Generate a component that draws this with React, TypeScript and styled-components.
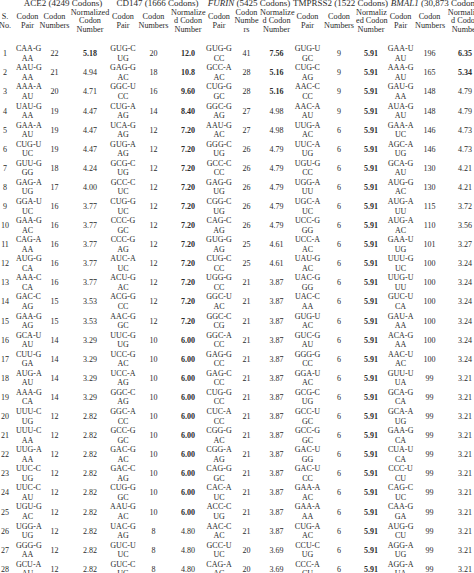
import styled, { createGlobalStyle } from "styled-components";

const GlobalStyle = createGlobalStyle`
  html, body {
    margin: 0;
    padding: 0;
    background: #ffffff;
    overflow: hidden;
  }
  body {
    font-family: "Liberation Serif", "DejaVu Serif", serif;
    color: #2b2b2b;
  }
`;

const Page = styled.div`
  width: 474px;
  height: 573px;
  overflow: hidden;
`;

const DataTable = styled.table`
  border-collapse: collapse;
  table-layout: fixed;
  width: 492px;
  margin-left: -6px;
  margin-top: -3px;
`;

const GroupRow = styled.tr`
  height: 12px;
`;

const GroupCell = styled.th`
  padding: 0;
  font-size: 9px;
  line-height: 10px;
  font-weight: 400;
  text-align: center;
  white-space: nowrap;
  vertical-align: middle;
`;

const Gene = styled.i`
  font-style: italic;
`;

const HeadCell = styled.th`
  padding: 0 0 10px;
  height: 25px;
  font-size: 8.2px;
  line-height: 8.4px;
  font-weight: 400;
  text-align: center;
  vertical-align: middle;
  white-space: nowrap;
`;

const BodyRow = styled.tr`
  height: 19.1px;
`;

const NoCell = styled.td`
  padding: 0;
  font-size: 8px;
  text-align: center;
  vertical-align: middle;
`;

const PairCell = styled.td`
  padding: 0;
  font-size: 8px;
  line-height: 9.55px;
  text-align: center;
  vertical-align: middle;
  white-space: nowrap;
`;

const NumCell = styled.td<{ $bold?: boolean }>`
  padding: 0;
  font-size: 8px;
  font-weight: ${(p) => (p.$bold ? 700 : 400)};
  text-align: center;
  vertical-align: middle;
`;

const widths = [22, 23, 31, 40, 26, 35, 34, 28, 27, 33, 29, 34, 30, 29, 29, 42];

interface Gene {
  name: string;
  italic: boolean;
  codons: string;
  normHead: string[];
  numHead: string[];
  rows: string[];
}

// "pair-line1/pair-line2 count normalized", a leading * marks a bold value
const genes: Gene[] = [
  {
    name: "ACE2",
    italic: false,
    codons: "4249",
    numHead: ["Codon", "Numbers"],
    normHead: ["Normalized", "Codon", "Number"],
    rows: [
      "CAA-G/AA 22 *5.18", "AAU-G/AA 21 4.94", "AAA-A/AU 20 4.71", "UAU-G/AA 19 4.47",
      "GAA-A/AU 19 4.47", "CUG-U/UC 19 4.47", "GUU-G/GG 18 4.24", "GAG-A/UG 17 4.00",
      "GGA-U/UC 16 3.77", "GAA-G/AC 16 3.77", "CAG-A/AA 16 3.77", "AUG-G/CA 16 3.77",
      "AAA-C/CA 16 3.77", "GAC-C/AG 15 3.53", "GAA-G/AG 15 3.53", "GCA-U/AU 14 3.29",
      "CUU-G/GA 14 3.29", "AUG-A/AU 14 3.29", "AAA-G/CA 14 3.29", "UUU-C/UG 12 2.82",
      "UUU-C/AA 12 2.82", "UUG-A/AA 12 2.82", "UUC-C/UG 12 2.82", "UUC-C/AU 12 2.82",
      "UGU-G/AC 12 2.82", "UGG-A/UG 12 2.82", "GGG-G/AA 12 2.82", "GCU-A/AU 12 2.82",
      "GGA-G/AA 12 2.82",
    ],
  },
  {
    name: "CD147",
    italic: false,
    codons: "1666",
    numHead: ["Codon", "Numbers"],
    normHead: ["Normalize", "d Codon", "Number"],
    rows: [
      "GUG-C/UG 20 *12.0", "GAG-G/AC 18 *10.8", "GGC-U/CC 16 *9.60", "CUG-A/AG 14 *8.40",
      "UCA-G/AG 12 *7.20", "GUG-A/AG 12 *7.20", "GCG-C/UG 12 *7.20", "GCC-C/UC 12 *7.20",
      "CUG-G/UC 12 *7.20", "CCC-G/GC 12 *7.20", "CCC-G/AG 12 *7.20", "AUC-A/UC 12 *7.20",
      "ACU-G/AC 12 *7.20", "ACG-G/CC 12 *7.20", "AAC-G/GC 12 *7.20", "UUC-G/UG 10 *6.00",
      "UCC-G/AC 10 *6.00", "UCC-A/AG 10 *6.00", "GGC-C/AG 10 *6.00", "GGC-A/CC 10 *6.00",
      "GCC-G/GC 10 *6.00", "GAC-G/AC 10 *6.00", "GAC-C/AG 10 *6.00", "CUG-G/GC 10 *6.00",
      "AAU-G/AC 10 *6.00", "UAC-G/AG 8 4.80", "GUC-U/UC 8 4.80", "GUC-C/UG 8 4.80",
      "GUG-G/UG 8 4.80",
    ],
  },
  {
    name: "FURIN",
    italic: true,
    codons: "5425",
    numHead: ["Codon", "Numbe", "rs"],
    normHead: ["Normalize", "d Codon", "Number"],
    rows: [
      "GUG-G/CC 41 *7.56", "GCC-A/AC 28 *5.16", "CUG-G/GC 28 *5.16", "GGC-G/AG 27 4.98",
      "AAU-G/AC 27 4.98", "GGG-C/UG 26 4.79", "GCC-C/CC 26 4.79", "GAG-G/UG 26 4.79",
      "CGG-C/UG 26 4.79", "CAG-C/AG 26 4.79", "GUG-G/AG 25 4.61", "CUG-C/CC 25 4.61",
      "UGG-G/CC 21 3.87", "GGC-U/AC 21 3.87", "GGC-C/CG 21 3.87", "GGC-A/CC 21 3.87",
      "GAG-G/CC 21 3.87", "GAG-C/CC 21 3.87", "CUG-G/CC 21 3.87", "CUC-A/CC 21 3.87",
      "CGG-G/AC 21 3.87", "CGG-A/AG 21 3.87", "CAG-G/GC 21 3.87", "CAC-A/UC 21 3.87",
      "ACC-C/UG 21 3.87", "AAC-C/AC 21 3.87", "GCC-U/UC 20 3.69", "CAG-A/AG 20 3.69",
      "CCU-G/GC 20 3.69",
    ],
  },
  {
    name: "TMPRSS2",
    italic: false,
    codons: "1522",
    numHead: ["Codon", "Numbers"],
    normHead: ["Normaliz", "ed Codon", "Number"],
    rows: [
      "GUG-U/GC 9 *5.91", "CUG-C/AG 9 *5.91", "AAC-C/CC 9 *5.91", "AAC-A/AU 9 *5.91",
      "UUG-A/AC 6 *5.91", "UUC-A/UG 6 *5.91", "UGU-G/CC 6 *5.91", "UGG-A/UU 6 *5.91",
      "UGC-A/UC 6 *5.91", "UCC-G/GG 6 *5.91", "UCC-A/AC 6 *5.91", "UAU-G/AC 6 *5.91",
      "UAC-G/GG 6 *5.91", "UAC-C/AA 6 *5.91", "GUG-U/AC 6 *5.91", "GUC-G/AU 6 *5.91",
      "GGG-G/CC 6 *5.91", "GGA-U/AC 6 *5.91", "GCG-C/UG 6 *5.91", "GCC-U/GC 6 *5.91",
      "GCC-G/GC 6 *5.91", "GAC-U/GG 6 *5.91", "GAC-U/CC 6 *5.91", "GAA-A/AC 6 *5.91",
      "GAA-A/AA 6 *5.91", "CUG-A/AC 6 *5.91", "CCU-C/UG 6 *5.91", "CCC-A/CU 6 *5.91",
      "CCA-G/CU 6 *5.91",
    ],
  },
  {
    name: "BMAL1",
    italic: true,
    codons: "30,873",
    numHead: ["Codon", "Numbers"],
    normHead: ["Normalize", "d Codon", "Number"],
    rows: [
      "GAA-U/AU 196 *6.35", "AAA-G/AU 165 *5.34", "GAU-G/AA 148 4.79", "AUA-G/AU 148 4.79",
      "GAA-A/UC 146 4.73", "AGC-A/UG 146 4.73", "GCA-G/AU 130 4.21", "AUG-G/AC 130 4.21",
      "AUG-A/UU 115 3.72", "AUG-A/AC 110 3.56", "GAA-U/UG 101 3.27", "UUU-G/UC 100 3.24",
      "UUG-U/UU 100 3.24", "GUC-U/CA 100 3.24", "GAU-A/AA 100 3.24", "ACA-G/AA 100 3.24",
      "AAC-U/AC 100 3.24", "GUU-U/UA 99 3.21", "GCA-G/CA 99 3.21", "GCA-A/UG 99 3.21",
      "GAA-G/CA 99 3.21", "CUA-U/CA 99 3.21", "CCC-U/CU 99 3.21", "CAG-C/UC 99 3.21",
      "CAA-G/GA 99 3.21", "AUG-G/CU 99 3.21", "AGG-A/UG 99 3.21", "AGG-A/UA 99 3.21",
      "AGA-G/UA 99 3.21",
    ],
  },
];

function lines(parts: string[]) {
  return parts.map((part, i) => (
    <span key={i}>
      {i > 0 && <br />}
      {part}
    </span>
  ));
}

function App() {
  const rowCount = genes[0].rows.length;
  return (
    <Page>
      <GlobalStyle />
      <DataTable>
        <colgroup>
          {widths.map((w, i) => (
            <col key={i} style={{ width: w }} />
          ))}
        </colgroup>
        <thead>
          <GroupRow>
            <GroupCell />
            {genes.map((g) => (
              <GroupCell key={g.name} colSpan={3}>
                {g.italic ? <Gene>{g.name}</Gene> : g.name} ({g.codons} Codons)
              </GroupCell>
            ))}
          </GroupRow>
          <tr>
            <HeadCell>{lines(["S.", "No."])}</HeadCell>
            {genes.map((g) => [
              <HeadCell key={g.name + "p"}>{lines(["Codon", "Pair"])}</HeadCell>,
              <HeadCell key={g.name + "n"}>{lines(g.numHead)}</HeadCell>,
              <HeadCell key={g.name + "z"}>{lines(g.normHead)}</HeadCell>,
            ])}
          </tr>
        </thead>
        <tbody>
          {Array.from({ length: rowCount }, (_, r) => (
            <BodyRow key={r}>
              <NoCell>{r + 1}</NoCell>
              {genes.map((g) => {
                const [pair, count, norm] = g.rows[r].split(" ");
                const bold = norm.startsWith("*");
                return [
                  <PairCell key={g.name + "p"}>{lines(pair.split("/"))}</PairCell>,
                  <NumCell key={g.name + "n"}>{count}</NumCell>,
                  <NumCell key={g.name + "z"} $bold={bold}>
                    {bold ? norm.slice(1) : norm}
                  </NumCell>,
                ];
              })}
            </BodyRow>
          ))}
        </tbody>
      </DataTable>
    </Page>
  );
}

export default App;
